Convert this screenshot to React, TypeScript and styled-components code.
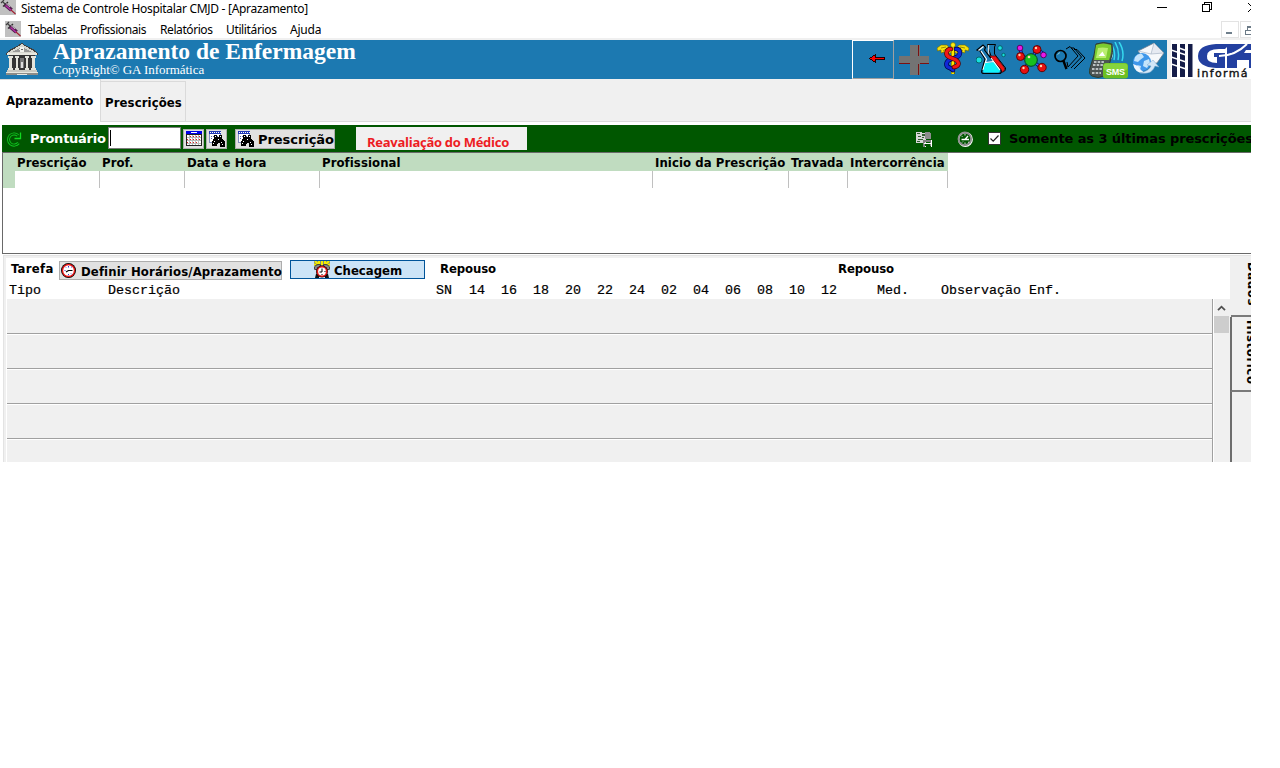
import React from "react";
import styled, { createGlobalStyle } from "styled-components";

const tahoma = "'DejaVu Sans Condensed', 'DejaVu Sans', sans-serif";
const verdana = "'DejaVu Sans', sans-serif";
const segoe = "'Noto Sans', 'Open Sans', sans-serif";

const Global = createGlobalStyle`
  * { box-sizing: border-box; }
  body { margin: 0; background: #fff; color: #000; }
  svg { display: block; flex: none; }
`;

const Window = styled.div`
  width: 1251px;
  height: 462px;
  overflow: hidden;
  display: flex;
  flex-direction: column;
  background: #fff;
  white-space: nowrap;
`;

/* ---------- title and menu bars ---------- */

const TitleBar = styled.header`
  height: 19px;
  flex: none;
  display: flex;
  align-items: flex-start;
  font: 400 12px/18px ${segoe};
  letter-spacing: -0.3px;
`;
const Title = styled.span`
  margin-left: 5px;
  flex: 1;
`;
const WindowButtons = styled.div`
  width: 94px;
  display: flex;
`;
const MenuBar = styled.nav`
  height: 19px;
  flex: none;
  display: flex;
  align-items: flex-start;
  padding-left: 5px;
  font: 400 12px/22px ${segoe};
`;
const MenuIcon = styled.div`
  padding-top: 2px;
`;
const MenuItem = styled.span<{ $w: number; $ls: number }>`
  width: ${(p) => p.$w}px;
  letter-spacing: ${(p) => p.$ls}px;
`;
const MenuList = styled.div`
  display: flex;
  flex: 1;
  padding-left: 7px;
`;
const MdiButtons = styled.div`
  display: flex;
  gap: 1px;
  width: 30px;
  padding-top: 2px;
  overflow: hidden;
`;
const MdiButton = styled.span`
  width: 18px;
  height: 17px;
  flex: none;
  border: 1px solid #e3e3e3;
`;

/* ---------- blue banner ---------- */

const Banner = styled.div`
  height: 41px;
  flex: none;
  display: flex;
  border-top: 2px solid #f0f0f0;
  background: #f0f0f0;
`;
const BannerBlue = styled.div`
  width: 1167px;
  height: 39px;
  display: flex;
  background: #1c79b1;
`;
const BannerHeading = styled.div`
  width: 801px;
  padding-left: 16px;
  color: #fff;
  font-family: "Liberation Serif", serif;
`;
const BannerTitle = styled.h1`
  margin: 0;
  font-size: 23.5px;
  line-height: 23px;
  font-weight: 700;
`;
const BannerSub = styled.div`
  font-size: 13px;
  line-height: 13px;
  letter-spacing: -0.04px;
`;
const HospitalSlot = styled.div`
  width: 38px;
  padding: 3px 0 0 6px;
  margin-right: -1px;
`;
const BackButton = styled.div`
  width: 42px;
  height: 39px;
  border: 1px solid;
  border-color: #fff #a0a0a0 #a0a0a0 #fff;
`;
const ToolSlot = styled.div<{ $w: number; $pad?: number }>`
  width: ${(p) => p.$w}px;
  padding-left: ${(p) => p.$pad ?? 0}px;
  padding-top: 2px;
`;
const Logo = styled.div`
  margin-left: 4px;
  width: 80px;
  height: 39px;
  background: #fff;
  overflow: hidden;
  display: flex;
`;
const LogoWord = styled.div`
  margin-left: 4px;
  padding-top: 3px;
`;
const LogoText = styled.div`
  font: 400 11px/9px "DejaVu Sans", sans-serif;
  letter-spacing: 1.35px;
  color: #111;
  -webkit-text-stroke: 0.4px #111;
`;

/* ---------- page tabs ---------- */

const Tabs = styled.div`
  height: 43px;
  flex: none;
  display: flex;
  background: #f0f0f0;
  font: 700 13px/16px ${tahoma};
`;
const ActiveTab = styled.div`
  width: 100px;
  background: #fff;
  border-top: 1px solid #dadada;
  padding: 13px 0 0 6px;
  letter-spacing: -0.06px;
`;
const TabRest = styled.div`
  flex: 1;
  display: flex;
  border-left: 1px solid #dadada;
  border-bottom: 1px solid #dadada;
  padding-top: 2px;
`;
const Tab = styled.div`
  width: 85px;
  border: 1px solid #dadada;
  border-left: 0;
  border-bottom: 0;
  padding: 13px 0 0 4px;
  letter-spacing: 0.1px;
`;

/* ---------- green filter bar ---------- */

const FilterBar = styled.div`
  margin: 3px 0 0 2px;
  height: 27px;
  flex: none;
  display: flex;
  background: #005700;
`;
const FilterLabel = styled.span`
  width: 79px;
  color: #fff;
  font: 700 13px/27px ${verdana};
  letter-spacing: -0.25px;
`;
const RefreshSlot = styled.div`
  width: 28px;
  padding: 6px 0 0 4px;
`;
const RecordInput = styled.div`
  width: 73px;
  height: 22px;
  margin-top: 2px;
  margin-left: -1px;
  background: #fff;
  border: 1px solid #7a7a7a;
  padding: 2px 0 0 1px;
`;
const Caret = styled.div`
  width: 1px;
  height: 16px;
  background: #000;
`;
const SmallButton = styled.div<{ $w: number; $ml: number }>`
  width: ${(p) => p.$w}px;
  margin: 4px 0 0 ${(p) => p.$ml}px;
  height: 20px;
  padding: 1px 0 0 2px;
  display: flex;
  background: #e1e1e1;
  border: 1px solid #adadad;
`;
const ButtonText = styled.span`
  font: 700 13px/18px ${verdana};
  margin-left: 4px;
  letter-spacing: -0.05px;
`;
const Notice = styled.div`
  width: 171px;
  height: 23px;
  margin: 2px 0 0 21px;
  padding-left: 11px;
  background: #f0f0f0;
  color: #ed1c24;
  font: 700 13px/31px "Open Sans", sans-serif;
  letter-spacing: -0.27px;
`;
const FilterRight = styled.div`
  margin-left: auto;
  width: 335px;
  display: flex;
  overflow: hidden;
  font: 700 13px/27px ${verdana};
  letter-spacing: -0.1px;
`;
const FilterIcon = styled.div<{ $w: number }>`
  width: ${(p) => p.$w}px;
  flex: none;
  padding-top: 6px;
`;
const CheckBox = styled.div`
  width: 13px;
  height: 13px;
  flex: none;
  margin: 7px 8px 0 0;
  background: #fff;
  border: 1px solid #333;
`;

/* ---------- prescriptions grid ---------- */

const GridPanel = styled.div`
  margin-left: 2px;
  height: 102px;
  flex: none;
  border: 1px solid #696969;
  border-right: 0;
`;
const gridColumns = "12px 85px 85px 135px 333px 136px 59px 100px";
const GridHead = styled.div`
  display: grid;
  grid-template-columns: ${gridColumns};
  width: 945px;
  height: 18px;
  background: #c0dcc0;
  font: 700 13px/19px ${tahoma};
`;
const HeadCell = styled.span`
  padding-left: 2px;
  letter-spacing: 0.08px;
`;
const GridRow = styled.div`
  display: grid;
  grid-template-columns: ${gridColumns};
  width: 945px;
  height: 17px;
`;
const RowMarker = styled.span`
  background: #c0dcc0;
`;
const GridCell = styled.span`
  border-right: 1px solid #c0c0c0;
`;

/* ---------- tasks area ---------- */

const TaskArea = styled.div`
  margin: 1px 0 0 3px;
  border-top: 1px solid #e3e3e3;
  border-left: 1px solid #e3e3e3;
  flex: 1;
  display: flex;
  background: #f0f0f0;
  padding: 2px 0 0 2px;
`;
const TaskMain = styled.div`
  width: 1224px;
  display: flex;
  flex-direction: column;
`;
const TaskHead = styled.div`
  height: 41px;
  flex: none;
  background: #fff;
`;
const TaskTools = styled.div`
  display: flex;
  height: 22px;
  font: 700 13px/21px ${tahoma};
`;
const TaskLabel = styled.span<{ $w: number; $ml: number; $ls?: number }>`
  width: ${(p) => p.$w}px;
  margin-left: ${(p) => p.$ml}px;
  letter-spacing: ${(p) => p.$ls ?? -0.1}px;
`;
const DefineButton = styled.div`
  width: 223px;
  height: 19px;
  margin-top: 3px;
  padding: 0 0 0 1px;
  display: flex;
  border: 1px solid #adadad;
  background: #e1e1e1;
  line-height: 19px;
  letter-spacing: 0.13px;
`;
const CheckButton = styled.div`
  width: 135px;
  height: 19px;
  margin: 2px 0 0 8px;
  padding-left: 23px;
  display: flex;
  border: 1px solid #005499;
  background: #cce4f7;
  line-height: 20px;
`;
const ButtonCaption = styled.span<{ $ml: number }>`
  margin-left: ${(p) => p.$ml}px;
`;
const ColumnTitles = styled.div`
  display: grid;
  grid-template-columns: 99px 328px 33px repeat(11, 32px) 56px 64px 130px;
  padding-left: 3px;
  font: 400 13.33px/22px "Liberation Mono", monospace;
  height: 19px;
  -webkit-text-stroke: 0.2px #000;
`;
const TaskBody = styled.div`
  flex: 1;
  display: flex;
`;
const TaskRows = styled.div`
  width: 1207px;
  border-right: 1px solid #a0a0a0;
  border-left: 1px solid #fff;
  padding-top: 1px;
  overflow: hidden;
  height: 163px;
`;
const TaskRow = styled.div`
  height: 35px;
  border-bottom: 1px solid #a0a0a0;
  & + & {
    border-top: 1px solid #fff;
  }
  &:first-child {
    height: 34px;
  }
`;
const ScrollBar = styled.div`
  width: 17px;
  border-left: 1px solid #fff;
`;
const ScrollUp = styled.div`
  height: 17px;
  padding: 6px 0 0 3px;
`;
const ScrollThumb = styled.div`
  height: 17px;
  width: 15px;
  background: #cdcdcd;
`;
const SideTabs = styled.div`
  width: 21px;
  overflow: hidden;
`;
const SideTab = styled.div<{ $h: number; $active?: boolean }>`
  height: ${(p) => p.$h}px;
  padding: ${(p) => (p.$active ? "4px 0 0 13px" : "3px 0 0 11px")};
  margin-left: ${(p) => (p.$active ? 1 : 0)}px;
  border-left: ${(p) => (p.$active ? "0" : "2px solid #6d6d6d")};
  border-bottom: 2px solid #7a7a7a;
  overflow: hidden;
`;
const SideText = styled.span<{ $ls: number }>`
  display: block;
  writing-mode: vertical-rl;
  font: 700 13px/16px ${tahoma};
  letter-spacing: ${(p) => p.$ls}px;
`;
const SideRest = styled.div`
  height: 80px;
  border-left: 2px solid #6d6d6d;
`;

/* ---------- drawings ---------- */

const Syringe = ({ top = 0 }: { top?: number }) => (
  <svg width="16" height={16 - top} viewBox={`0 ${top} 16 ${16 - top}`}>
    <rect width="16" height="16" fill="#c0c0c0" />
    <path d="M1 4 L4 1 M2.5 2.5 L6 6" stroke="#404040" strokeWidth="1.2" />
    <path d="M3 7.500 L8 3" stroke="#303030" strokeWidth="1.3" />
    <path d="M5 5.500 L11.5 11" stroke="#50204c" strokeWidth="4" />
    <path d="M5.5 6.500 L11.5 11.5" stroke="#b42fa4" strokeWidth="1.500" />
    <path d="M6 4.5 L10 8" stroke="#d8c8d8" strokeWidth="0.9" />
    <path d="M11 11 L15.5 15" stroke="#a02030" strokeWidth="1.2" />
  </svg>
);

const WindowControls = () => (
  <svg width="94" height="18" viewBox="0 0 94 18" fill="none" stroke="#000" shapeRendering="crispEdges">
    <path d="M0 7.500H10" />
    <path d="M45.500 4.500H52.500V11.500H45.500Z" />
    <path d="M47.500 4V2.500H54.500V9.500H53" />
    <path d="M91 3L100 12M100 3L91 12" shapeRendering="auto" />
  </svg>
);

const Hospital = () => (
  <svg width="32" height="32" viewBox="0 0 32 32" shapeRendering="crispEdges">
    <path d="M0 10L5 6L11 3L16 0L21 3L27 6L32 10V12H0Z" fill="#404040" />
    <path d="M2 9.500L16 1L30 9.500Z" fill="#d8d8d0" />
    <path d="M7 8.500L16 4L25 8.500Z" fill="#9a9a98" />
    <circle cx="16" cy="6.500" r="2.500" fill="#f4f4ee" />
    <circle cx="16" cy="6.500" r="1" fill="#666" />
    <path d="M1 10H31V12H1Z" fill="#e8e8e0" />
    <path d="M3 12H29V28H3Z" fill="#353535" />
    <g fill="#e4e4dc">
      <path d="M2 13h5v2h-1v10h1v2H2v-2h1V15H2z" />
      <path d="M9 13h4v2h-1v10h1v2H9v-2h1V15H9z" />
      <path d="M19 13h4v2h-1v10h1v2h-4v-2h1V15h-1z" />
      <path d="M25 13h5v2h-1v10h1v2h-5v-2h1V15h-1z" />
    </g>
    <path d="M14 15h4v10h-4z" fill="#777" />
    <path d="M15 19h2v6h-2z" fill="#ddd" />
    <path d="M1 27H31V29H1Z" fill="#c8c8c0" />
    <path d="M0 29H32V32H0Z" fill="#8c8c88" />
    <path d="M0 29.500H32M11 31H21" stroke="#e8e8e0" />
  </svg>
);

const BackArrow = () => (
  <svg width="40" height="37" viewBox="0 0 40 37" shapeRendering="crispEdges">
    <path d="M16.500 17.500L22.500 13.500V16.500H31.500V18.500H22.500V21.500Z" fill="#f00" stroke="#200" />
  </svg>
);

const Cross = () => (
  <svg width="32" height="34" viewBox="0 0 32 34" shapeRendering="crispEdges">
    <path d="M12 3h10v11h9v8H22v11H12V22H1v-8h11z" fill="#737373" />
    <path d="M20.500 3V14M1 21.500H12M20.500 22V33M22 21.500H31" stroke="#7c1010" />
  </svg>
);

const Caduceus = () => (
  <svg width="32" height="33" viewBox="0 0 32 33">
    <g stroke="#6b6500" strokeWidth="0.6" fill="#f4e010">
      <path d="M14 8L10 3H4L0 6L0.500 9L4 8L4 11L7 10L8 12L13 11L15 10Z" />
      <path d="M18 8L22 3H28L32 6L31.500 9L28 8L28 11L25 10L24 12L19 11L17 10Z" />
    </g>
    <path d="M4 6L9 5M6 9L11 6M9 10L13 8M28 6L23 5M26 9L21 6M23 10L19 8" stroke="#807800" strokeWidth="0.800" />
    <path d="M16 2V32" stroke="#6b6500" strokeWidth="4" />
    <path d="M15.800 2V32" stroke="#ffe800" strokeWidth="2.400" />
    <g fill="none" strokeLinecap="round">
      <path d="M19 7C24 7 24 13 20 15L12 18C8 21 9 25 13 26L16 28" stroke="#000050" strokeWidth="4.600" />
      <path d="M19 7C24 7 24 13 20 15L12 18C8 21 9 25 13 26L16 28" stroke="#1028d8" strokeWidth="3.200" />
      <path d="M14 7C9 7 8 13 12 15L19 18C23 21 22 24 17 25" stroke="#500" strokeWidth="4.600" />
      <path d="M14 7C9 7 8 13 12 15L19 18C23 21 22 24 17 25" stroke="#f01818" strokeWidth="3.200" />
    </g>
    <circle cx="16" cy="3" r="2.400" fill="#ffee10" stroke="#6b6500" strokeWidth="0.600" />
  </svg>
);

const Flasks = () => (
  <svg width="32" height="33" viewBox="0 0 32 33">
    <path d="M11.500 2.500H19.500L18.500 5V12L29.500 26Q30 30 25 30L15 14L12 5Z" fill="#1c79b1" stroke="#000" />
    <path d="M12.500 3V13" stroke="#cfd8dc" strokeWidth="1.300" />
    <path d="M13 14H19.500L28.500 26Q29 30 25 30Z" fill="#f01414" stroke="#600" strokeWidth="0.700" />
    <path d="M1 8L7 3L9.500 5.500L8.500 8L14 15L25 28Q26 31.500 23 31.500H7Q5 31 6 28L9 17L4 9Z" fill="#1c79b1" stroke="#000" strokeWidth="1.200" />
    <path d="M2.500 8.500L7.500 4.500M5 9L10.500 17L7 28" fill="none" stroke="#fff" strokeWidth="1.200" />
    <path d="M9.500 21L18 20L24 28Q24 30.500 22 30.500H8Q6.500 30 7.500 28Z" fill="#10f4f8" />
    <path d="M9.500 20.500L18 19.500M15 16L24 28" stroke="#fff" strokeWidth="1.200" />
    <g fill="#16e0e0" stroke="#055" strokeWidth="0.800">
      <circle cx="3" cy="18" r="3" />
      <circle cx="24" cy="6" r="2.300" />
      <circle cx="27.500" cy="13" r="1.700" />
    </g>
  </svg>
);

const Molecule = () => (
  <svg width="32" height="33" viewBox="0 0 32 33">
    <path d="M4 6L6 14L15 18L21 7L28 12M15 18L8 27M15 18L26 26" fill="none" stroke="#000060" strokeWidth="3.200" />
    <path d="M4 6L6 14L15 18L21 7L28 12M15 18L8 27M15 18L26 26" fill="none" stroke="#3060ff" strokeWidth="1.600" />
    <circle cx="15" cy="18" r="6.300" fill="#18c020" stroke="#042" />
    <g fill="#e81010" stroke="#500" strokeWidth="0.900">
      <circle cx="21" cy="7.500" r="4" />
      <circle cx="4.500" cy="14.500" r="4" />
      <circle cx="8.500" cy="27.500" r="4.200" />
      <circle cx="26" cy="25.500" r="4.200" />
    </g>
    <g fill="#e818e8" stroke="#505" strokeWidth="0.900">
      <circle cx="4" cy="6" r="2.800" />
      <circle cx="27.500" cy="13" r="2.800" />
    </g>
    <g fill="#ffd8b0">
      <circle cx="20" cy="6" r="1.200" />
      <circle cx="3.500" cy="13" r="1.200" />
      <circle cx="7.500" cy="26" r="1.200" />
      <circle cx="25" cy="24" r="1.200" />
      <circle cx="13" cy="15" r="1.300" />
    </g>
  </svg>
);

const Finder = () => (
  <svg width="34" height="33" viewBox="0 0 34 33" fill="none" stroke="#000">
    <path d="M12 7L16 4.500L24 14L14 25L13 20" strokeWidth="1" />
    <path d="M17 6L20 6L27.500 15L17 26M20 7.500H23L31 16L20 27" strokeWidth="1" />
    <circle cx="6.500" cy="14" r="5.500" strokeWidth="1.700" />
    <path d="M3.500 12.500L6 10.500" stroke="#9cc" />
    <path d="M9.500 19L12.500 27" strokeWidth="2.400" />
  </svg>
);

const SmsPhone = () => (
  <svg width="40" height="38" viewBox="0 0 40 38">
    <g fill="none" stroke="#35d8ee" strokeWidth="1.500">
      <path d="M22 2Q27 9 25 18M26 0Q31 9 29 18M30 0Q36 9 33 19" />
      <path d="M21 5Q25 11 22 17" stroke="#a8f0f8" />
    </g>
    <path d="M7 2Q14 -1 23 2Q25 10 21 20L15 34Q9 37 3 34Q-1 32 1 26L5 13Z" fill="#4c5454" stroke="#2d4030" />
    <path d="M7 3Q14 0 22 3Q23 10 20 18H5Z" fill="#7ccc30" />
    <path d="M9 6Q13 5 19 6L17 16H7Z" fill="#b9ee70" />
    <path d="M9.500 14L13.500 9.500L16 14Z" fill="#fff" />
    <path d="M5 20H15M4 23H14M3 27H13M3 31H12" stroke="#b8c0c0" strokeWidth="2" strokeDasharray="2.500 1.200" />
    <rect x="14" y="21" width="25" height="15.500" rx="3" fill="#6cbf22" />
    <rect x="14.500" y="21.500" width="24" height="7" rx="3" fill="#86d43c" />
    <text x="17" y="33" fontFamily="'Liberation Sans', sans-serif" fontWeight="700" fontSize="9" letterSpacing="-0.200" fill="#fff">SMS</text>
  </svg>
);

const GlobeMail = () => (
  <svg width="34" height="33" viewBox="0 0 34 33">
    <path d="M6 9L22 1L32 11L25 21L16 23Z" fill="#f6f8fb" stroke="#6a788c" strokeWidth="0.800" />
    <path d="M22 1L19 12L31.500 11" fill="#e6eaf2" stroke="#a8b4c6" strokeWidth="0.700" />
    <path d="M6 9L19 12" stroke="#a8b4c6" strokeWidth="0.700" />
    <circle cx="10" cy="20" r="9" fill="#3f97ea" />
    <path d="M3 15Q6 11 10 12L12 15L8 18L6 20L2 19ZM12 19L17 17L18 21L15 26L11 24ZM5 23L9 24L8 28Z" fill="#c4e4fb" />
    <path d="M1 22Q3 32 13 31Q8 28 6 24Z" fill="#eef6fd" />
    <path d="M8 31Q20 33 23 24L27 25L21 18L15 23L19 24Q17 29 8 31Z" fill="#d2e7f8" stroke="#7fa8cc" strokeWidth="0.500" />
  </svg>
);

const LogoBars = () => (
  <svg width="22" height="39" viewBox="0 0 22 39">
    <path d="M1 4H6V37H1ZM9 4H14V37H9ZM17 4H21.500V37H17Z" fill="#141c48" />
    <path d="M0 10L15 15M0 17L15 22M0 24L15 29M8 8L15 10.500" stroke="#fff" strokeWidth="1.500" />
  </svg>
);

const LogoLetters = () => (
  <svg width="62" height="26" viewBox="0 0 62 26">
    <path d="M33 1H19Q1 2 1 13Q1 24 19 25H28V10H17V14H20V20Q9 20 10 13Q10 6 22 6H28Z" fill="#2340a0" />
    <path d="M30 25V8Q34 1 42 1H60V25H52V17H40V25Z" fill="#2340a0" />
    <path d="M49 7H60V10H47Z" fill="#fff" />
    <path d="M22 13Q38 13 50 1" stroke="#fff" strokeWidth="2" fill="none" />
    <path d="M30 1H47L34 10Q30 9 30 7Z" fill="#2340a0" />
  </svg>
);

const Refresh = () => (
  <svg width="16" height="17" viewBox="0 0 16 17" fill="none">
    <path d="M12 4.500A5.600 5.600 0 1 0 12.500 12" stroke="#10c820" strokeWidth="3" />
    <path d="M12 4.500A5.600 5.600 0 1 0 12.500 12" stroke="#005700" strokeWidth="1.200" />
    <path d="M14.500 1.500V7.500H8.500" stroke="#10d820" strokeWidth="1.300" />
  </svg>
);

const Calendar = () => (
  <svg width="17" height="16" viewBox="0 0 17 16" shapeRendering="crispEdges">
    <path d="M0 0H16V15H0Z" fill="#202020" />
    <path d="M0 0H16V3H0Z" fill="#0000e8" />
    <path d="M5 1H11V2H5Z" fill="#fff" />
    <path d="M1 4H15V14H1Z" fill="#fff" />
    <path d="M1 6.500H15M1 9.500H15M1 12.500H15M3.500 4V14M6.500 4V14M9.500 4V14M12.500 4V14" stroke="#bbb" />
    <path d="M4 5.500H15M1 8.500H15M1 11.500H12" stroke="#e02020" strokeDasharray="1 2" />
  </svg>
);

const SearchSheet = () => (
  <svg width="16" height="16" viewBox="0 0 16 16" shapeRendering="crispEdges">
    <path d="M0.500 1.500H11.500V11.500H0.500Z" fill="#fff" stroke="#8090c0" />
    <path d="M0 0H12V3H0Z" fill="#2038b8" />
    <path d="M1 1.500H12" stroke="#fff" strokeDasharray="1 1" />
    <path d="M2 5.500H10M2 7.500H4" stroke="#5060a0" strokeDasharray="1 1" />
    <path d="M5 4H8V6H10V4H13V7L16 11V16H11V12H9L8 13V15H3V11L5 7Z" fill="#000" />
    <path d="M6 5.500H7M11 5.500H12M5 10.500H6M4 12.500H5M12 11.500H13M13 13.500H14M9 8.500H10" stroke="#fff" />
  </svg>
);

const DisabledCard = () => (
  <svg width="16" height="16" viewBox="0 0 16 16" shapeRendering="crispEdges">
    <path d="M0 1H5L6 2H10V12H0Z" fill="#d8d8d8" />
    <path d="M1 2H4V3H1ZM6 3H9V5H6ZM2 5H5V6H2ZM2 8H7V9H2ZM1 10H4V11H1ZM6 6H8V7H6Z" fill="#305c30" />
    <path d="M9 1H14V2H15V8H9Z" fill="#8c8c8c" />
    <path d="M7 9H16V15H14V11H9V16H7Z" fill="#808080" />
    <path d="M9 15.500H10M15.500 9V16M8 12.500H15" stroke="#fff" />
  </svg>
);

const DisabledClock = () => (
  <svg width="16" height="16" viewBox="0 0 16 16" fill="none">
    <circle cx="8.400" cy="8.400" r="6.800" stroke="#fff" strokeWidth="1.400" />
    <circle cx="7.800" cy="7.800" r="6.300" stroke="#909090" strokeWidth="1.800" />
    <path d="M4.500 8.500H12M8 8.500L11 5" stroke="#fff" strokeWidth="1.300" />
    <path d="M8 3V4.500M8 11.500V13M4.500 5L5.500 5.500M11 11L12 11.500M5 11.500L6 10.500" stroke="#ddd" />
  </svg>
);

const Tick = () => (
  <svg width="11" height="11" viewBox="0 0 11 11">
    <path d="M1.500 5.500L4.200 8.200L9.500 2.500" fill="none" stroke="#222" strokeWidth="1.200" />
  </svg>
);

const RedClock = () => (
  <svg width="16" height="17" viewBox="0 0 16 17">
    <circle cx="7.500" cy="8.500" r="7.500" fill="#000" />
    <circle cx="7.500" cy="8.500" r="6.700" fill="#e81818" />
    <circle cx="7.500" cy="8.500" r="5.300" fill="#fff" />
    <path d="M7.500 8.500H11.500M7.500 8.500L5 10" stroke="#000" strokeWidth="1.100" />
    <path d="M7.500 4V5.500M7.500 12V13.200M3.500 8.500H4.500M10 5.500L10.800 4.800M5 5.500L4.400 4.900M10 11.500L10.700 12.300" stroke="#2020d0" strokeWidth="0.900" />
  </svg>
);

const AlarmClock = () => (
  <svg width="16" height="17" viewBox="0 0 16 17">
    <path d="M0 0H16V5H0Z" fill="#3a3800" opacity="0.5" />
    <path d="M1 0L4 3M5 0V3M8 0V4M11 0V3M15 0L12 3M0 3L3 5M16 3L13 5" stroke="#f8f000" strokeWidth="2" />
    <path d="M0 8Q1 2 7 4L3 9ZM16 8Q15 2 9 4L13 9Z" fill="#888" stroke="#111" strokeWidth="0.700" />
    <path d="M2 13H5V17H1ZM14 13H11V17H15Z" fill="#111" />
    <circle cx="8" cy="10.500" r="6" fill="#200" />
    <circle cx="8" cy="10.500" r="5.400" fill="#e01818" />
    <circle cx="8" cy="10.500" r="3.900" fill="#fff" />
    <path d="M8 7.500V11H5.500" fill="none" stroke="#000" />
    <path d="M10.500 10.500H11.500M8 13V14" stroke="#000" />
  </svg>
);

const Chevron = () => (
  <svg width="9" height="7" viewBox="0 0 9 7">
    <path d="M1 5.200L4.500 1.700L8 5.200" fill="none" stroke="#505050" strokeWidth="1.800" />
  </svg>
);

const MinimizeMark = () => (
  <svg width="16" height="15" viewBox="0 0 16 15" shapeRendering="crispEdges">
    <path d="M4 11H10" stroke="#6f7f8c" strokeWidth="2" />
  </svg>
);

const RestoreMark = () => (
  <svg width="16" height="15" viewBox="0 0 16 15" shapeRendering="crispEdges" fill="none" stroke="#6b7a86">
    <path d="M4.500 8.500H10.500V12.500H4.500ZM6.500 8V5.500H12.500V10" />
    <path d="M6 4.500H13" />
  </svg>
);

const menu: [string, number, number][] = [
  ["Tabelas", 52, -0.5],
  ["Profissionais", 80, -0.4],
  ["Relatórios", 66, -0.42],
  ["Utilitários", 64, -0.36],
  ["Ajuda", 40, -0.2],
];
const gridTitles = ["Prescrição", "Prof.", "Data e Hora", "Profissional", "Inicio da Prescrição", "Travada", "Intercorrência"];
const hours = ["14", "16", "18", "20", "22", "24", "02", "04", "06", "08", "10", "12"];

export default function App() {
  return (
    <>
      <Global />
      <Window>
        <TitleBar>
          <Syringe top={1} />
          <Title>Sistema de Controle Hospitalar CMJD - [Aprazamento]</Title>
          <WindowButtons>
            <WindowControls />
          </WindowButtons>
        </TitleBar>
        <MenuBar>
          <MenuIcon><Syringe /></MenuIcon>
          <MenuList>
            {menu.map(([label, w, ls]) => (
              <MenuItem key={label} $w={w} $ls={ls}>{label}</MenuItem>
            ))}
          </MenuList>
          <MdiButtons>
            <MdiButton><MinimizeMark /></MdiButton>
            <MdiButton><RestoreMark /></MdiButton>
          </MdiButtons>
        </MenuBar>

        <Banner>
          <BannerBlue>
            <HospitalSlot><Hospital /></HospitalSlot>
            <BannerHeading>
              <BannerTitle>Aprazamento de Enfermagem</BannerTitle>
              <BannerSub>CopyRight© GA Informática</BannerSub>
            </BannerHeading>
            <ToolSlot $w={14} />
            <BackButton><BackArrow /></BackButton>
            <ToolSlot $w={43} $pad={4}><Cross /></ToolSlot>
            <ToolSlot $w={39}><Caduceus /></ToolSlot>
            <ToolSlot $w={40}><Flasks /></ToolSlot>
            <ToolSlot $w={38}><Molecule /></ToolSlot>
            <ToolSlot $w={35}><Finder /></ToolSlot>
            <ToolSlot $w={43}><SmsPhone /></ToolSlot>
            <ToolSlot $w={35}><GlobeMail /></ToolSlot>
          </BannerBlue>
          <Logo>
            <LogoBars />
            <LogoWord>
              <LogoLetters />
              <LogoText>informá</LogoText>
            </LogoWord>
          </Logo>
        </Banner>

        <Tabs>
          <ActiveTab>Aprazamento</ActiveTab>
          <TabRest>
            <Tab>Prescrições</Tab>
          </TabRest>
        </Tabs>

        <FilterBar>
          <RefreshSlot><Refresh /></RefreshSlot>
          <FilterLabel>Prontuário</FilterLabel>
          <RecordInput><Caret /></RecordInput>
          <SmallButton $w={21} $ml={2}><Calendar /></SmallButton>
          <SmallButton $w={21} $ml={2}><SearchSheet /></SmallButton>
          <SmallButton $w={100} $ml={8}>
            <SearchSheet />
            <ButtonText>Prescrição</ButtonText>
          </SmallButton>
          <Notice>Reavaliação do Médico</Notice>
          <FilterRight>
            <FilterIcon $w={41}><DisabledCard /></FilterIcon>
            <FilterIcon $w={31}><DisabledClock /></FilterIcon>
            <CheckBox><Tick /></CheckBox>
            <span>Somente as 3 últimas prescrições</span>
          </FilterRight>
        </FilterBar>

        <GridPanel>
          <GridHead>
            <span />
            {gridTitles.map((t) => <HeadCell key={t}>{t}</HeadCell>)}
          </GridHead>
          <GridRow>
            <RowMarker />
            {gridTitles.map((t) => <GridCell key={t} />)}
          </GridRow>
        </GridPanel>

        <TaskArea>
          <TaskMain>
            <TaskHead>
              <TaskTools>
                <TaskLabel $w={48} $ml={5} $ls={0.3}>Tarefa</TaskLabel>
                <DefineButton>
                  <RedClock />
                  <ButtonCaption $ml={4}>Definir Horários/Aprazamento</ButtonCaption>
                </DefineButton>
                <CheckButton>
                  <AlarmClock />
                  <ButtonCaption $ml={4}>Checagem</ButtonCaption>
                </CheckButton>
                <TaskLabel $w={383} $ml={15}>Repouso</TaskLabel>
                <TaskLabel $w={60} $ml={15}>Repouso</TaskLabel>
              </TaskTools>
              <ColumnTitles>
                <span>Tipo</span>
                <span>Descrição</span>
                <span>SN</span>
                {hours.map((h) => <span key={h}>{h}</span>)}
                <span>Med.</span>
                <span>Observação Enf.</span>
              </ColumnTitles>
            </TaskHead>
            <TaskBody>
              <TaskRows>
                {[0, 1, 2, 3, 4].map((i) => <TaskRow key={i} />)}
              </TaskRows>
              <ScrollBar>
                <ScrollUp><Chevron /></ScrollUp>
                <ScrollThumb />
              </ScrollBar>
            </TaskBody>
          </TaskMain>
          <SideTabs>
            <SideTab $h={59} $active><SideText $ls={0.6}>Dados</SideText></SideTab>
            <SideTab $h={75}><SideText $ls={0.6}>Histórico</SideText></SideTab>
            <SideRest />
          </SideTabs>
        </TaskArea>
      </Window>
    </>
  );
}
